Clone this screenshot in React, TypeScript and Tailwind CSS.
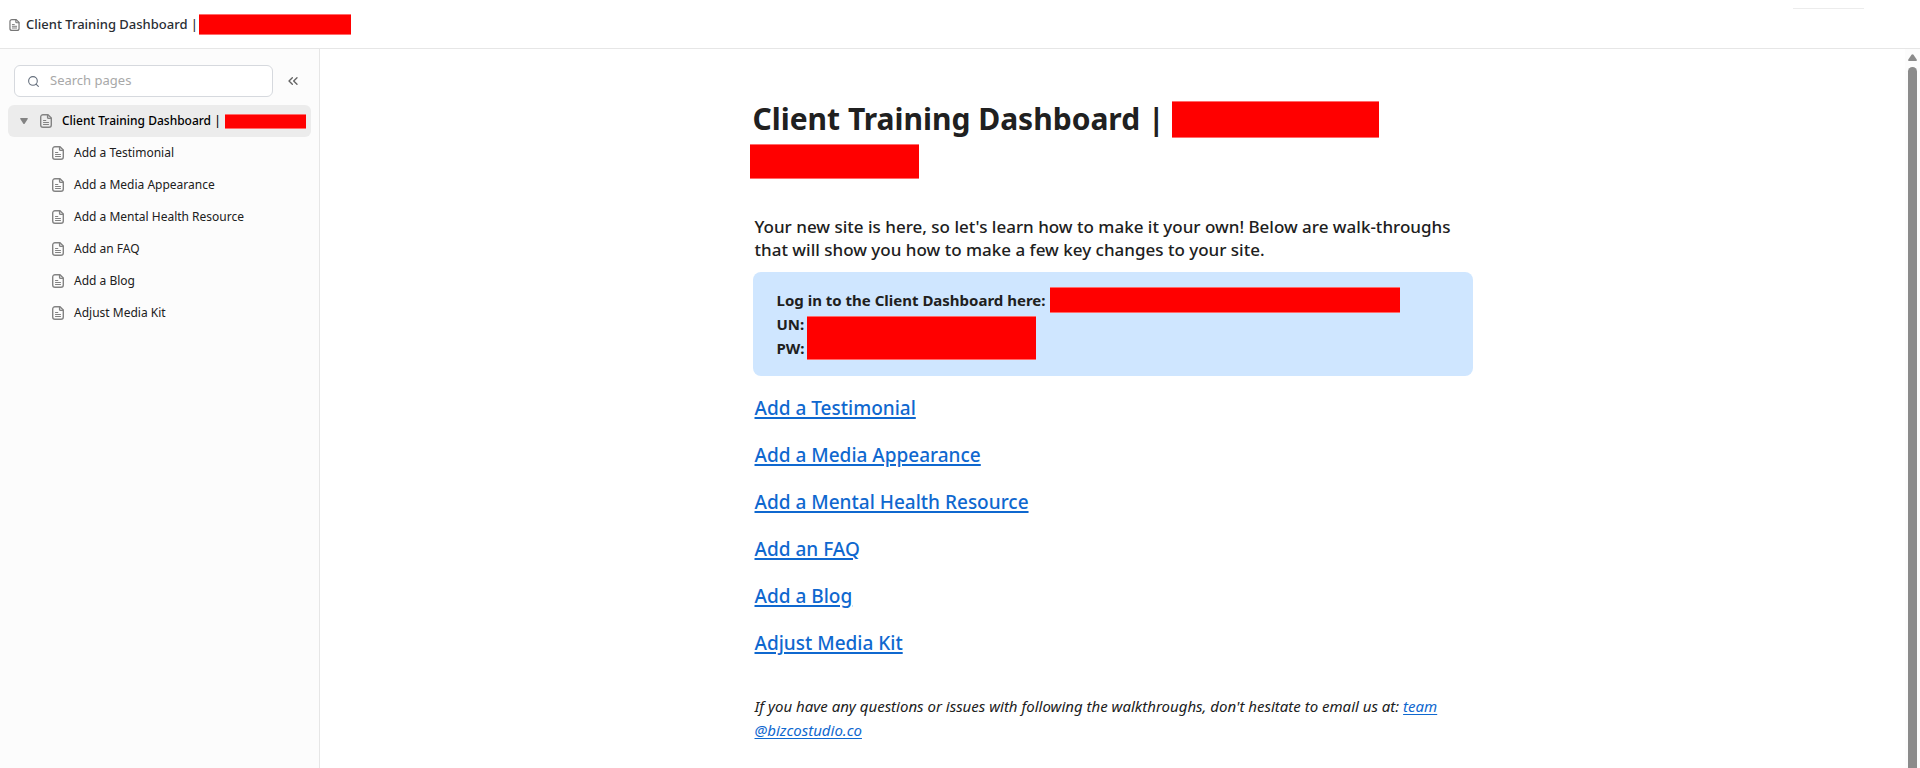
import { ChevronsLeft, Search } from "lucide-react";

const pages = [
  "Add a Testimonial",
  "Add a Media Appearance",
  "Add a Mental Health Resource",
  "Add an FAQ",
  "Add a Blog",
  "Adjust Media Kit",
];

function PageIcon({ className }: { className: string }) {
  return (
    <svg
      viewBox="0 0 12 14"
      fill="none"
      stroke="currentColor"
      strokeWidth="1.4"
      strokeLinejoin="round"
      strokeLinecap="round"
      className={className}
      aria-hidden="true"
    >
      <path d="M3 .7h5L11.3 4v7A2.3 2.3 0 0 1 9 13.3H3A2.3 2.3 0 0 1 .7 11V3A2.3 2.3 0 0 1 3 .7Z" />
      <path d="M7.6.9v2.5a1 1 0 0 0 1 1h2.5" />
      <path d="M3.5 6.5h2.3M3.5 8.5h5M3.5 10.5h5" strokeWidth="1.1" />
    </svg>
  );
}

function Redacted({ className }: { className: string }) {
  return <span aria-hidden="true" className={`block shrink-0 border-y border-[#ff6b6b] bg-[#ff0000] ${className}`} />;
}

function Header() {
  return (
    <header className="flex h-[49px] shrink-0 items-start justify-between border-b border-[#e6e6e6] bg-white pl-[9px] pr-14">
      <div className="flex h-full items-center pt-px">
        <PageIcon className="h-3 w-[11px] text-[#777777]" />
        <span className="ml-[6px] whitespace-nowrap text-[13px] font-medium text-[#2a2e34]">Client Training Dashboard |</span>
        <Redacted className="ml-px h-[21px] w-[152px]" />
      </div>
      <div className="mt-2 h-px w-[71px] bg-[#ececec]" />
    </header>
  );
}

function Sidebar() {
  return (
    <aside className="flex w-80 shrink-0 flex-col border-r border-[#e6e6e6] bg-[#fcfcfc] px-2 pt-4">
      <div className="flex items-center pl-[6px] pr-[10px]">
        <label className="flex h-8 min-w-0 flex-1 items-center gap-[10px] rounded-md border border-[#d6d9de] bg-white px-3">
          <Search size={13} className="shrink-0 text-[#656f7d]" strokeWidth={2} />
          <input
            type="search"
            aria-label="Search pages"
            placeholder="Search pages"
            className="min-w-0 flex-1 bg-transparent text-[13px] outline-none placeholder:text-[#a8a8a8]"
          />
        </label>
        <button type="button" aria-label="Collapse sidebar" className="ml-3 text-[#646464]">
          <ChevronsLeft size={16} strokeWidth={2} />
        </button>
      </div>
      <nav className="mt-2 text-xs text-[#202020]">
        <a href="#top" className="flex h-8 items-center rounded-md bg-[#ececec] pl-3 font-medium text-black">
          <svg viewBox="0 0 8 6" className="h-[6px] w-2 text-[#838383]" aria-hidden="true">
            <path d="M.8 0h6.4q1.2 0 .5 1L4.8 5.4q-.8 1-1.6 0L.3 1Q-.4 0 .8 0Z" fill="currentColor" />
          </svg>
          <PageIcon className="ml-3 h-[14px] w-3 text-[#838383]" />
          <span className="ml-[10px] whitespace-nowrap">Client Training Dashboard |</span>
          <Redacted className="ml-1 h-[15px] w-[81px]" />
        </a>
        <ul>
          {pages.map((page) => (
            <li key={page}>
              <a href="#top" className="flex h-8 items-center gap-[10px] pl-11">
                <PageIcon className="h-[14px] w-3 text-[#838383]" />
                {page}
              </a>
            </li>
          ))}
        </ul>
      </nav>
    </aside>
  );
}

function Article() {
  return (
    <article className="mx-auto w-full max-w-[720px] text-[#202020]">
      <h1 className="text-[30px] font-bold leading-[38px]">
        <span className="flex items-center">
          Client Training Dashboard | <Redacted className="ml-2 h-[37px] w-[207px]" />
        </span>
        <Redacted className="-ml-[3px] mt-[6px] h-[35px] w-[169px]" />
      </h1>

      <p className="mt-9 px-[2px] text-[17px] font-medium leading-[23px]">
        Your new site is here, so let's learn how to make it your own! Below are walk-throughs that will show you how to
        make a few key changes to your site.
      </p>

      <section className="mt-[11px] rounded-lg bg-[#cfe6ff] px-6 py-4 text-[15px] font-bold leading-6">
        <div className="flex h-6 items-center">
          Log in to the Client Dashboard here: <Redacted className="ml-1 h-[26px] w-[350px]" />
        </div>
        <div className="flex items-end">
          <div>
            <div>UN:</div>
            <div>PW:</div>
          </div>
          <Redacted className="ml-[2px] h-11 w-[229px]" />
        </div>
      </section>

      <ul className="mt-[17px] px-[2px] text-[19px] font-medium leading-[30px] text-[#0f68cf]">
        {pages.map((page) => (
          <li key={page} className="mb-[17px]">
            <a href="#top" className="underline decoration-2 underline-offset-2">
              {page}
            </a>
          </li>
        ))}
      </ul>

      <p className="mt-9 px-[2px] text-[15px] italic leading-6">
        If you have any questions or issues with following the walkthroughs, don't hesitate to email us at:{" "}
        <a href="mailto:team@bizcostudio.co" className="text-[#0f68cf] underline underline-offset-2">
          team
          <wbr />
          @bizcostudio.co
        </a>
      </p>
    </article>
  );
}

function ScrollTrack() {
  return (
    <div aria-hidden="true" className="flex w-[15px] shrink-0 flex-col items-center bg-[#fcfcfc] pt-[5px]">
      <svg viewBox="0 0 9 7" className="h-[7px] w-[9px] text-[#8b8b8b]">
        <path d="M3.5.8q1-1.2 2 0l3.2 4.6Q9.4 7 8 7H1Q-.4 7 .3 5.4Z" fill="currentColor" />
      </svg>
      <div className="mt-[6px] w-[9px] flex-1 rounded-t-full bg-[#8b8b8b]" />
    </div>
  );
}

export default function App() {
  return (
    <div id="top" className="flex h-screen flex-col overflow-hidden bg-white font-['Noto_Sans','Open_Sans',sans-serif]">
      <Header />
      <div className="flex min-h-0 flex-1">
        <Sidebar />
        <main className="min-w-0 flex-1 overflow-hidden pt-[51px]">
          <Article />
        </main>
        <ScrollTrack />
      </div>
    </div>
  );
}
